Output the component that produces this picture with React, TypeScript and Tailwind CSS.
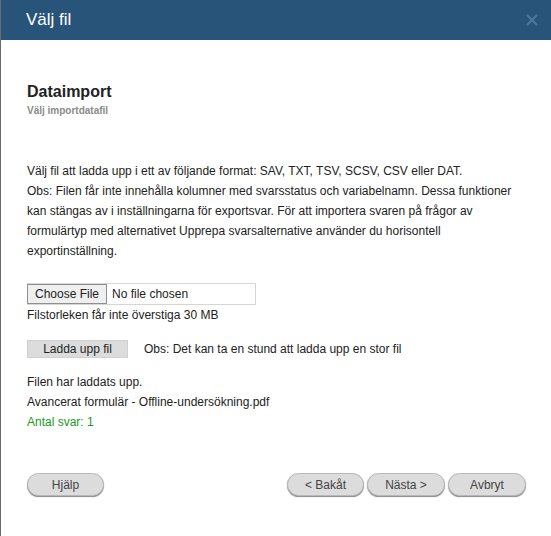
export default function App() {
  const pill =
    'h-[23px] rounded-full border border-[#b8b8b8] bg-[#dcdcdc] shadow-[0_1px_1px_#8a8a8a] text-[12px] text-[#444] flex items-center justify-center';

  return (
    <div className="w-[551px] h-[536px] bg-white border-l border-[#6b6b6b] flex flex-col font-['Liberation_Sans',Arial,sans-serif] overflow-hidden">
      <div className="h-[40px] shrink-0 bg-[#285479] flex items-center justify-between pl-[25px] pr-[13px]">
        <span className="text-white text-[17px]">Välj fil</span>
        <svg width="12" height="12" viewBox="0 0 12 12" className="opacity-70">
          <path d="M1 1L11 11M11 1L1 11" stroke="#5b84a8" strokeWidth="2.4" />
        </svg>
      </div>

      <div className="flex-1 flex flex-col pl-[26px] pr-[20px]">
        <div className="mt-[42px] text-[#222] text-[16px] font-bold leading-[20px]">Dataimport</div>
        <div className="mt-[3px] text-[#8a8a8a] text-[10px] font-bold leading-[12px]">Välj importdatafil</div>

        <div className="mt-[44px] text-[12px] leading-[20px] text-[#222]">
          <p>Välj fil att ladda upp i ett av följande format: SAV, TXT, TSV, SCSV, CSV eller DAT.</p>
          <p>
            Obs: Filen får inte innehålla kolumner med svarsstatus och variabelnamn. Dessa funktioner kan stängas av i
            inställningarna för exportsvar. För att importera svaren på frågor av formulärtyp med alternativet Upprepa
            svarsalternative använder du horisontell exportinställning.
          </p>
        </div>

        <div className="mt-[22px] w-[229px] h-[22px] border border-[#d6d6d6] flex items-center text-[12px] text-[#222]">
          <div className="h-[20px] px-[7px] flex items-center bg-[#efefef] border border-[#8f8f8f] -ml-px">Choose File</div>
          <span className="ml-[5px]">No file chosen</span>
        </div>
        <div className="mt-[2px] text-[12px] leading-[16px] text-[#222]">Filstorleken får inte överstiga 30 MB</div>

        <div className="mt-[17px] flex items-center text-[12px] text-[#222]">
          <div className="w-[101px] h-[18px] bg-[#dcdcdc] border border-[#d0d0d0] flex items-center justify-center">Ladda upp fil</div>
          <span className="ml-[16px]">Obs: Det kan ta en stund att ladda upp en stor fil</span>
        </div>

        <div className="mt-[14px] text-[12px] leading-[20px] text-[#222]">
          <p>Filen har laddats upp.</p>
          <p>Avancerat formulär - Offline-undersökning.pdf</p>
          <p className="text-[#1a9a1a]">Antal svar: 1</p>
        </div>

        <div className="mt-[41px] flex items-center justify-between pr-[5px]">
          <button className={`${pill} w-[77px]`}>Hjälp</button>
          <div className="flex gap-[3px]">
            <button className={`${pill} w-[77px]`}>&lt; Bakåt</button>
            <button className={`${pill} w-[78px]`}>Nästa &gt;</button>
            <button className={`${pill} w-[78px]`}>Avbryt</button>
          </div>
        </div>
      </div>
    </div>
  );
}
